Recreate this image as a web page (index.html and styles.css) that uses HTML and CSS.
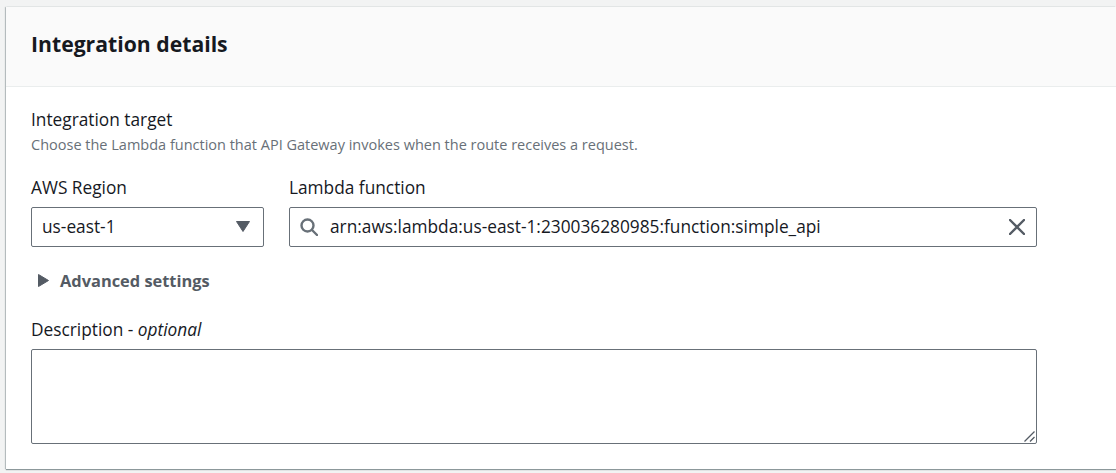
FILE: index.html
```html
<!DOCTYPE html>
<html lang="en">
<head>
    <meta charset="UTF-8">
    <meta name="viewport" content="width=device-width, initial-scale=1.0">
    <title>Integration details</title>
    <link rel="stylesheet" href="styles.css">
</head>
<body>
    <div class="card">
        <div class="card-header">
            <h2>Integration details</h2>
        </div>
        <div class="card-body">
            <div class="target">
                <div class="label">Integration target</div>
                <div class="hint">Choose the Lambda function that API Gateway invokes when the route receives a request.</div>
            </div>
            <div class="row">
                <div class="field field-region">
                    <label class="label">AWS Region</label>
                    <div class="box">
                        <span class="box-text">us-east-1</span>
                        <svg class="caret" width="14" height="11" viewBox="0 0 14 11"><path d="M0.5 0.5h13L7 10.5z" fill="#545b64" stroke="#545b64" stroke-linejoin="round"/></svg>
                    </div>
                </div>
                <div class="field field-lambda">
                    <label class="label">Lambda function</label>
                    <div class="box">
                        <svg class="search" width="18" height="18" viewBox="0 0 18 18" fill="none" stroke="#687078" stroke-width="2.4"><circle cx="7.5" cy="7.5" r="6"/><path d="M12 12l5 5" stroke-linecap="round"/></svg>
                        <span class="box-text">arn:aws:lambda:us-east-1:230036280985:function:simple_api</span>
                        <svg class="clear" width="16" height="16" viewBox="0 0 16 16" fill="none" stroke="#545b64" stroke-width="2.4"><path d="M1 1l14 14M15 1L1 15" stroke-linecap="round"/></svg>
                    </div>
                </div>
            </div>
            <div class="advanced">
                <svg width="11" height="13" viewBox="0 0 11 13"><path d="M0.5 0.5l10 6-10 6z" fill="#545b64" stroke="#545b64" stroke-linejoin="round"/></svg>
                <span>Advanced settings</span>
            </div>
            <label class="label" for="description">Description - <em>optional</em></label>
            <div class="description-wrap">
                <textarea id="description" class="description"></textarea>
                <svg class="grip" width="11" height="11" viewBox="0 0 11 11" fill="none" stroke="#545b64" stroke-width="1.3"><path d="M0.5 10.5L10.5 0.5M6 10.5L10.5 6"/></svg>
            </div>
        </div>
    </div>
</body>
</html>
```

FILE: styles.css
```css
html, body {
    height: 100%;
}
body {
    margin: 0;
    padding: 7px 0 0 6px;
    box-sizing: border-box;
    overflow: hidden;
    background-color: #f2f3f3;
    color: #16191f;
    font-family: "Open Sans", "Noto Sans", Arial, sans-serif;
    font-size: 17.3px;
}
.card {
    background-color: #fff;
    box-shadow: 0 1px 1px 0 rgba(0, 28, 36, 0.4), -1px 0 1px 0 rgba(0, 28, 36, 0.2), 0 -1px 1px -1px rgba(0, 28, 36, 0.2);
    height: 462px;
    box-sizing: border-box;
}
.card-header {
    background-color: #fafafa;
    border-bottom: 1px solid #eaeded;
    height: 80px;
    box-sizing: border-box;
    padding: 0 25px 6px;
    display: flex;
    align-items: center;
}
.card-header h2 {
    margin: 0;
    font-size: 21.2px;
    font-weight: 700;
    line-height: 30px;
}
.card-body {
    padding: 22px 25px 0;
}
.label {
    display: block;
    line-height: 22px;
    font-size: 17.3px;
}
.hint {
    margin-top: 4px;
    font-size: 14.5px;
    line-height: 20px;
    color: #687078;
}
.row {
    display: flex;
    gap: 25px;
    margin-top: 22px;
}
.field-region {
    width: 233px;
}
.field-lambda {
    width: 748px;
}
.box {
    display: flex;
    align-items: center;
    height: 40px;
    box-sizing: border-box;
    margin-top: 8px;
    padding: 0 10px 1px;
    border: 1px solid #687078;
    border-radius: 2px;
}
.box-text {
    flex: 1;
    white-space: nowrap;
}
.search {
    margin-right: 12px;
}
.caret {
    margin-right: 3px;
}
.clear {
    margin-right: 1px;
}
.advanced {
    display: flex;
    align-items: center;
    gap: 11px;
    margin: 22px 0 0 7px;
    height: 22px;
    font-size: 16.4px;
    font-weight: 700;
    color: #545b64;
}
.advanced + .label {
    margin-top: 28px;
}
.description-wrap {
    position: relative;
    width: 1006px;
    margin-top: 8px;
}
.description {
    display: block;
    width: 100%;
    height: 95px;
    box-sizing: border-box;
    border: 1px solid #687078;
    border-radius: 2px;
    background-color: #fff;
    resize: none;
}
.grip {
    position: absolute;
    right: 2px;
    bottom: 2px;
}
```
